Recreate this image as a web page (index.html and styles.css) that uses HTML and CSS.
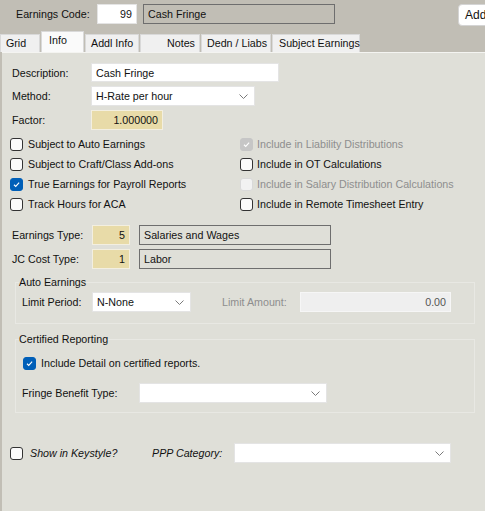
FILE: index.html
```html
<!DOCTYPE html>
<html lang="en">
<head>
    <meta charset="UTF-8">
    <title>Earnings Code</title>
    <link rel="stylesheet" href="styles.css">
</head>
<body>
    <div class="window">
        <div class="topbar">
            <span class="code-label">Earnings Code:</span>
            <div class="box box-white box-code">99</div>
            <div class="box box-readonly box-name">Cash Fringe</div>
            <button class="add-btn">Add</button>
        </div>

        <div class="tabs">
            <div class="tab tab-grid">Grid</div>
            <div class="tab tab-info active">Info</div>
            <div class="tab tab-addl">Addl Info</div>
            <div class="tab tab-notes">Notes</div>
            <div class="tab tab-dedn">Dedn / Liabs</div>
            <div class="tab tab-subject">Subject Earnings</div>
        </div>

        <div class="panel">
            <div class="row row-desc">
                <span class="label">Description:</span>
                <div class="box box-white box-desc">Cash Fringe</div>
            </div>
            <div class="row row-method">
                <span class="label">Method:</span>
                <div class="box box-white select box-method">
                    <span>H-Rate per hour</span>
                    <svg class="chev" viewBox="0 0 9 5"><polyline points="0.5,0.5 4.5,4.5 8.5,0.5"/></svg>
                </div>
            </div>
            <div class="row row-factor">
                <span class="label">Factor:</span>
                <div class="box box-tan num box-factor">1.000000</div>
            </div>

            <div class="checks">
                <div class="check-col">
                    <div class="check"><span class="cb"></span>Subject to Auto Earnings</div>
                    <div class="check"><span class="cb"></span>Subject to Craft/Class Add-ons</div>
                    <div class="check"><span class="cb on"><svg viewBox="0 0 13 13"><polyline points="3.5,6.8 5.6,8.8 9.6,4.4"/></svg></span>True Earnings for Payroll Reports</div>
                    <div class="check"><span class="cb"></span>Track Hours for ACA</div>
                </div>
                <div class="check-col check-col-right">
                    <div class="check disabled"><span class="cb on-disabled"><svg viewBox="0 0 13 13"><polyline points="3.5,6.8 5.6,8.8 9.6,4.4"/></svg></span>Include in Liability Distributions</div>
                    <div class="check"><span class="cb"></span>Include in OT Calculations</div>
                    <div class="check disabled"><span class="cb off-disabled"></span>Include in Salary Distribution Calculations</div>
                    <div class="check"><span class="cb"></span>Include in Remote Timesheet Entry</div>
                </div>
            </div>

            <div class="row row-etype">
                <span class="label">Earnings Type:</span>
                <div class="box box-tan num box-small">5</div>
                <div class="box box-readonly box-lookup">Salaries and Wages</div>
            </div>
            <div class="row row-jc">
                <span class="label">JC Cost Type:</span>
                <div class="box box-tan num box-small">1</div>
                <div class="box box-readonly box-lookup">Labor</div>
            </div>

            <fieldset class="group group-auto">
                <legend>Auto Earnings</legend>
                <div class="row">
                    <span class="label">Limit Period:</span>
                    <div class="box box-white select box-period">
                        <span>N-None</span>
                        <svg class="chev" viewBox="0 0 9 5"><polyline points="0.5,0.5 4.5,4.5 8.5,0.5"/></svg>
                    </div>
                    <span class="label label-amount disabled">Limit Amount:</span>
                    <div class="box box-disabled num box-amount">0.00</div>
                </div>
            </fieldset>

            <fieldset class="group group-cert">
                <legend>Certified Reporting</legend>
                <div class="check check-cert"><span class="cb on"><svg viewBox="0 0 13 13"><polyline points="3.5,6.8 5.6,8.8 9.6,4.4"/></svg></span>Include Detail on certified reports.</div>
                <div class="row row-fringe">
                    <span class="label">Fringe Benefit Type:</span>
                    <div class="box box-white select box-fringe">
                        <span></span>
                        <svg class="chev" viewBox="0 0 9 5"><polyline points="0.5,0.5 4.5,4.5 8.5,0.5"/></svg>
                    </div>
                </div>
            </fieldset>

            <div class="row row-bottom">
                <div class="check check-key"><span class="cb"></span><em>Show in Keystyle?</em></div>
                <span class="label label-ppp"><em>PPP Category:</em></span>
                <div class="box box-white select box-ppp">
                    <span></span>
                    <svg class="chev" viewBox="0 0 9 5"><polyline points="0.5,0.5 4.5,4.5 8.5,0.5"/></svg>
                </div>
            </div>
        </div>
    </div>
</body>
</html>
```

FILE: styles.css
```css
:root {
    --top-bg: #c1beb5;
    --panel: #dfdfd8;
    --tan: #e8dba8;
    --text: #111111;
    --text-disabled: #8e8e8e;
    --border-dark: #6e6e6e;
    --blue: #005fb8;
}

* {
    margin: 0;
    padding: 0;
    box-sizing: border-box;
}

body {
    width: 485px;
    height: 511px;
    overflow: hidden;
    background: var(--top-bg);
    font-family: 'Liberation Sans', Arial, sans-serif;
    font-size: 10.7px;
    color: var(--text);
}

.window {
    height: 511px;
    display: flex;
    flex-direction: column;
}

/* Top bar */
.topbar {
    height: 31px;
    display: flex;
    align-items: flex-start;
    padding-top: 4px;
}

.code-label {
    width: 97px;
    padding-left: 16px;
    line-height: 20px;
}

.box {
    height: 20px;
    line-height: 18px;
    padding: 0 4px;
    white-space: nowrap;
    overflow: hidden;
}

.box-white {
    background: #ffffff;
    border: 1px solid #e4e4e4;
}

.box-readonly {
    background: transparent;
    border: 1px solid var(--border-dark);
}

.box-tan {
    background: var(--tan);
    border: 1px solid #f3efe0;
}

.box-disabled {
    background: #efefef;
    border: 1px solid #f6f6f6;
    color: #555;
}

.num {
    text-align: right;
}

.box-code {
    width: 40px;
    margin-right: 6px;
    text-align: right;
}

.box-name {
    width: 192px;
}

.add-btn {
    margin-left: auto;
    width: 40px;
    height: 22px;
    margin-right: -13px;
    background: #ffffff;
    border: 1px solid #d4d4d4;
    border-radius: 4px;
    font-family: inherit;
    font-size: 12px;
    text-align: left;
    padding-left: 6px;
    color: var(--text);
}

/* Tabs */
.tabs {
    height: 21px;
    display: flex;
    align-items: flex-end;
}

.tab {
    height: 18px;
    line-height: 16px;
    background: #f0f0f0;
    border: 1px solid #d9d9d9;
    border-bottom: none;
    margin-right: 1px;
    white-space: nowrap;
}

.tab.active {
    height: 21px;
    line-height: 17px;
    background: #fafafa;
}

.tab-grid { width: 40px; padding-left: 5px; }
.tab-info { width: 43px; padding-left: 7px; }
.tab-addl { width: 54px; padding-left: 5px; }
.tab-notes { width: 60px; padding-left: 26px; }
.tab-dedn { width: 70px; padding-left: 5px; }
.tab-subject { width: 88px; padding-left: 6px; }

/* Panel */
.panel {
    flex: 1;
    margin-left: 2px;
    background: var(--panel);
    border-top: 1px solid #f4f4f1;
    padding-top: 10px;
    display: flex;
    flex-direction: column;
}

.row {
    display: flex;
    align-items: center;
    height: 20px;
}

.label {
    line-height: 20px;
    white-space: nowrap;
}

.row > .label:first-child {
    width: 89px;
    padding-left: 10px;
}

.row-desc { height: 19px; }
.row-desc .box { height: 19px; }
.row-method { margin-top: 4px; }
.row-factor { margin-top: 4px; }

.box-desc { width: 188px; }
.box-method { width: 164px; }
.box-factor { width: 72px; }

.select {
    display: flex;
    align-items: center;
    justify-content: space-between;
}

.chev {
    width: 9px;
    height: 5px;
    margin-right: 2px;
    fill: none;
    stroke: #7a7a7a;
    stroke-width: 1;
}

/* Checkboxes */
.checks {
    display: flex;
    margin-top: 4px;
}

.check-col {
    width: 238px;
    padding-left: 8px;
    display: flex;
    flex-direction: column;
}

.check-col-right {
    padding-left: 0;
}

.check {
    height: 20px;
    display: flex;
    align-items: center;
    white-space: nowrap;
}

.check.disabled {
    color: var(--text-disabled);
}

.cb {
    width: 13px;
    height: 13px;
    border: 1px solid #333333;
    border-radius: 3px;
    background: #fbfbfb;
    margin-right: 5px;
    flex-shrink: 0;
    display: flex;
}

.cb svg {
    width: 11px;
    height: 11px;
    fill: none;
    stroke: #ffffff;
    stroke-width: 1.3;
}

.cb.on {
    background: var(--blue);
    border-color: var(--blue);
}

.cb.on-disabled {
    background: #c6c6c6;
    border-color: #c6c6c6;
}

.cb.off-disabled {
    background: #f2f2f2;
    border-color: #d9d9d9;
}

.check-col-right .cb {
    margin-right: 4px;
}

/* Lookup rows */
.row-etype {
    margin-top: 11px;
}

.row-jc {
    margin-top: 4px;
}

.row-etype > .label:first-child,
.row-jc > .label:first-child {
    width: 90px;
}

.box-small {
    width: 38px;
    margin-right: 9px;
}

.box-lookup {
    width: 192px;
}

/* Group boxes */
.group {
    margin-left: 13px;
    width: 460px;
    border: 1px solid #e8e8e3;
}

.group legend {
    margin-left: 3px;
    line-height: 14px;
    white-space: nowrap;
}

.group-auto {
    margin-top: 6px;
    padding: 3px 0 11px 0;
}

.group .row > .label:first-child {
    width: 76px;
    padding-left: 6px;
}

.box-period {
    width: 99px;
}

.label-amount {
    margin-left: 31px;
    width: 78px;
}

.disabled {
    color: var(--text-disabled);
}

.box-amount {
    width: 151px;
}

.group-cert {
    margin-top: 8px;
    padding: 7px 0 9px 0;
}

.check-cert {
    padding-left: 7px;
}

.row-fringe {
    margin-top: 10px;
}

.group .row-fringe > .label:first-child {
    width: 123px;
}

.box-fringe {
    width: 188px;
}

/* Bottom row */
.row-bottom {
    margin-top: 30px;
}

.check-key {
    padding-left: 8px;
    width: 150px;
}

.check-key .cb {
    margin-right: 7px;
}

.label-ppp {
    width: 82px;
}

.box-ppp {
    width: 217px;
}
```
